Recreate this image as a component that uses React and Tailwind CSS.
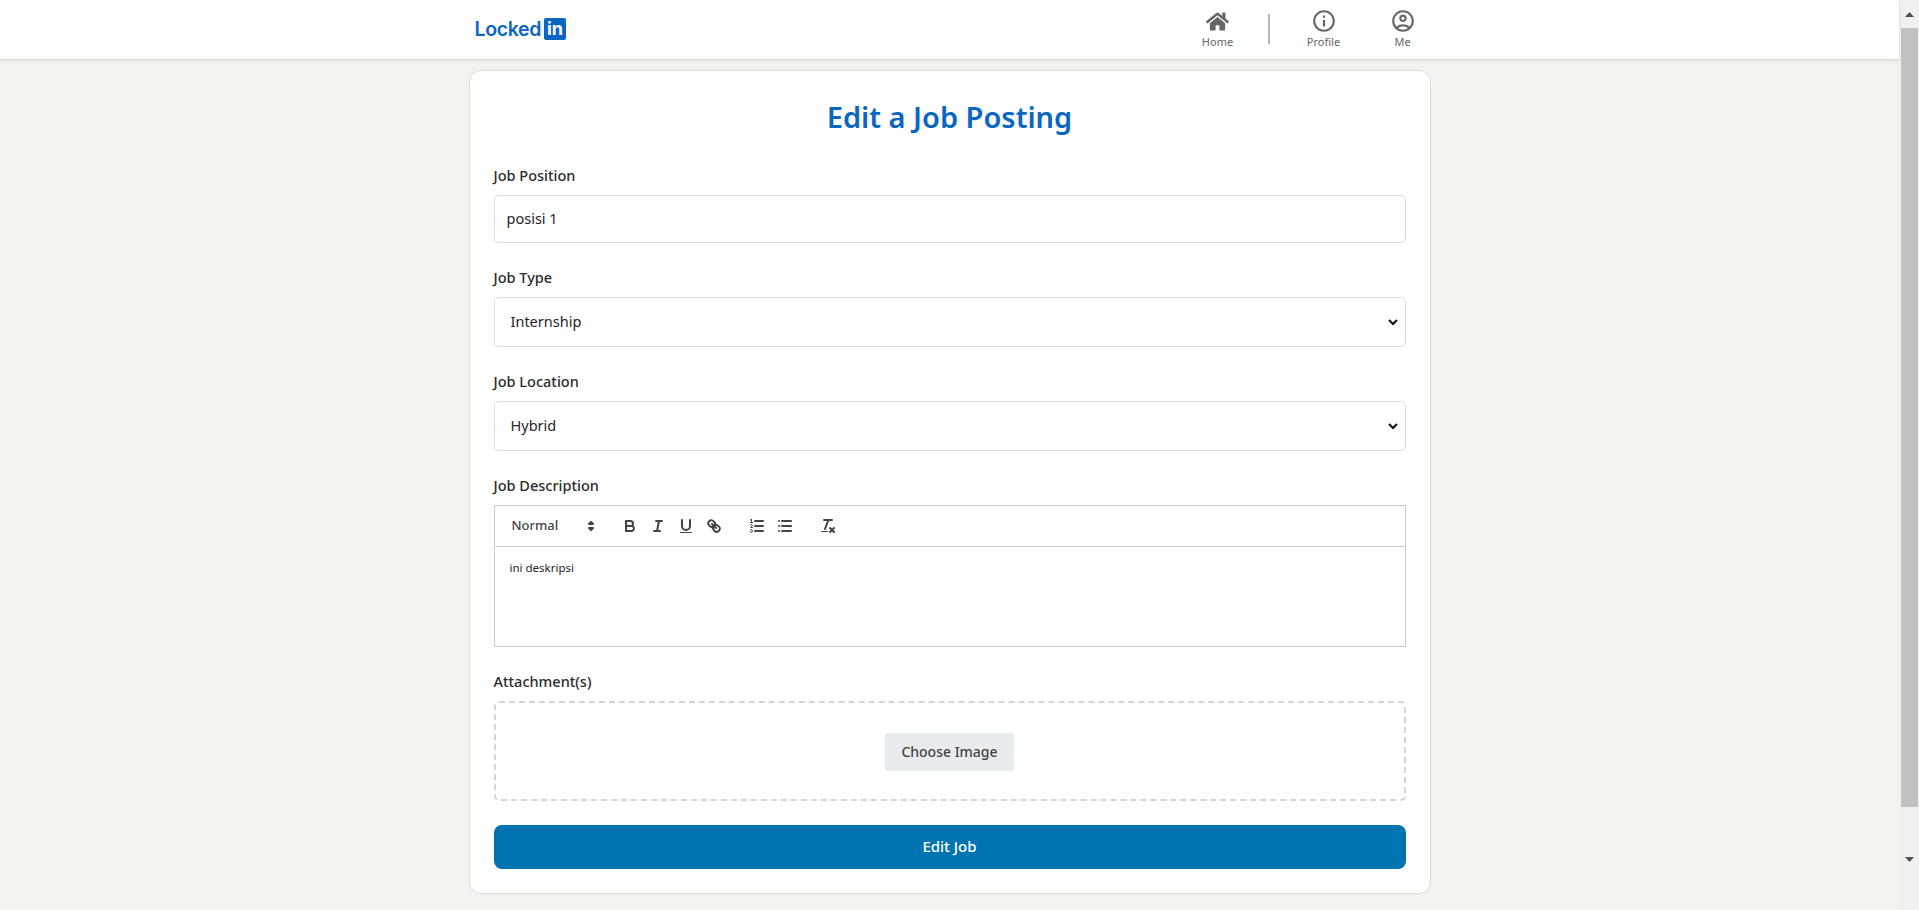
import React from 'react'
import { FaHome } from 'react-icons/fa'
import { MdInfoOutline, MdOutlineAccountCircle } from 'react-icons/md'

const NavItem = ({ icon, label, className }) => (
  <div className={`flex flex-col items-center w-[60px] text-[#666666] ${className}`}>
    <div className="h-[26px] flex items-center justify-center">{icon}</div>
    <span className="text-[11px] leading-[16px]">{label}</span>
  </div>
)

const Navbar = () => (
  <nav className="h-[59px] shrink-0 bg-white shadow-[0_1px_3px_rgba(0,0,0,0.15)] relative">
    <div className="w-[962px] mx-auto h-full flex items-center pl-[6px]">
      <div className="flex items-center gap-[3px] -mt-[1px]">
        <span className="font-['Inter',sans-serif] font-semibold text-[19.5px] leading-[22px] tracking-[-0.35px] text-[#0a66c2]">Locked</span>
        <span className="w-[22px] h-[22px] rounded-[2px] bg-[#0a66c2] flex items-center justify-center font-['Inter',sans-serif] font-bold text-[18px] leading-[22px] text-white">in</span>
      </div>
      <div className="ml-auto flex items-center -mt-[1px]">
        <NavItem icon={<FaHome size={23} />} label="Home" />
        <div className="w-[2px] h-[30px] bg-[#b5b5b5] mx-[20px]" />
        <NavItem icon={<MdInfoOutline size={26} />} label="Profile" className="ml-[4px]" />
        <NavItem icon={<MdOutlineAccountCircle size={26} />} label="Me" className="ml-[19px] -mr-[2px]" />
      </div>
    </div>
  </nav>
)

const Field = ({ label, children }) => (
  <div className="flex flex-col">
    <label className="text-[14.5px] leading-[24px] mb-[8px] font-medium text-[#2b2b2b]">{label}</label>
    {children}
  </div>
)

const boxClass = 'w-full bg-white border border-[#dcdcdc] rounded-[5px] text-[14.5px] text-[#1f2328] outline-none'

const Select = ({ value, options }) => (
  <div className="relative">
    <select defaultValue={value} className={`${boxClass} appearance-none pl-4 pr-8 h-[50px]`}>
      {options.map(o => <option key={o}>{o}</option>)}
    </select>
    <svg viewBox="0 0 10 7" className="w-[10px] h-[7px] absolute right-[8px] top-[22px] fill-none stroke-[#111111] stroke-2">
      <path d="M1 1 L5 5 L9 1" />
    </svg>
  </div>
)

const Icon = ({ children }) => (
  <button type="button" className="w-[28px] h-[24px] px-[5px] py-[3px] flex">
    <svg viewBox="0 0 18 18" className="w-[18px] h-[18px] fill-none stroke-[#444444] stroke-2 [stroke-linecap:round] [stroke-linejoin:round]">
      {children}
    </svg>
  </button>
)

const Toolbar = () => (
  <div className="h-[41px] px-[8px] flex items-center border-b border-[#cccccc]">
    <div className="w-[98px] h-[24px] relative flex items-center pl-[9px] mr-[15px] text-[13px] font-medium text-[#444444]">
      Normal
      <svg viewBox="0 0 18 18" className="w-[18px] h-[18px] absolute right-[1px] top-[3px] fill-[#444444] stroke-[#444444] stroke-2 [stroke-linejoin:round]">
        <polygon points="7 11 9 13 11 11 7 11" />
        <polygon points="7 7 9 5 11 7 7 7" />
      </svg>
    </div>
    <div className="flex mr-[15px]">
      <Icon>
        <path d="M5,4H9.5A2.5,2.5,0,0,1,12,6.5v0A2.5,2.5,0,0,1,9.5,9H5A0,0,0,0,1,5,9V4A0,0,0,0,1,5,4Z" />
        <path d="M5,9h5.5A2.5,2.5,0,0,1,13,11.5v0A2.5,2.5,0,0,1,10.5,14H5a0,0,0,0,1,0,0V9A0,0,0,0,1,5,9Z" />
      </Icon>
      <Icon>
        <line x1="7" x2="13" y1="4" y2="4" />
        <line x1="5" x2="11" y1="14" y2="14" />
        <line x1="8" x2="10" y1="14" y2="4" />
      </Icon>
      <Icon>
        <path d="M5,3V9a4.012,4.012,0,0,0,4,4H9a4.012,4.012,0,0,0,4-4V3" />
        <rect className="fill-[#444444] stroke-0" height="1" rx="0.5" ry="0.5" width="12" x="3" y="15" />
      </Icon>
      <Icon>
        <line x1="7" x2="11" y1="7" y2="11" />
        <path d="M8.9,4.577a3.476,3.476,0,0,1,.36,4.679A3.476,3.476,0,0,1,4.577,8.9C3.185,7.5,2.035,6.4,4.217,4.217S7.5,3.185,8.9,4.577Z" />
        <path d="M13.423,9.1a3.476,3.476,0,0,0-4.679-.36,3.476,3.476,0,0,0,.36,4.679c1.392,1.392,2.5,2.542,4.679.36S14.815,10.5,13.423,9.1Z" />
      </Icon>
    </div>
    <div className="flex mr-[15px]">
      <Icon>
        <line x1="7" x2="15" y1="4" y2="4" />
        <line x1="7" x2="15" y1="9" y2="9" />
        <line x1="7" x2="15" y1="14" y2="14" />
        <g className="stroke-1">
          <line x1="2.5" x2="4.5" y1="5.5" y2="5.5" />
          <path className="fill-[#444444] stroke-0" d="M3.5,6A0.5,0.5,0,0,1,3,5.5V3.085l-0.276.138A0.5,0.5,0,0,1,2.053,3c-0.124-.247-0.023-0.324.224-0.447l1-.5A0.5,0.5,0,0,1,4,2.5v3A0.5,0.5,0,0,1,3.5,6Z" />
          <path d="M4.5,10.5h-2c0-.234,1.85-1.076,1.85-2.234A0.959,0.959,0,0,0,2.5,8.156" />
          <path d="M2.5,14.846a0.959,0.959,0,0,0,1.85-.109A0.7,0.7,0,0,0,3.75,14a0.688,0.688,0,0,0,.6-0.736,0.959,0.959,0,0,0-1.85-.109" />
        </g>
      </Icon>
      <Icon>
        <line x1="6" x2="15" y1="4" y2="4" />
        <line x1="6" x2="15" y1="9" y2="9" />
        <line x1="6" x2="15" y1="14" y2="14" />
        <line x1="3" x2="3" y1="4" y2="4" />
        <line x1="3" x2="3" y1="9" y2="9" />
        <line x1="3" x2="3" y1="14" y2="14" />
      </Icon>
    </div>
    <Icon>
      <line x1="5" x2="13" y1="3" y2="3" />
      <line x1="6" x2="9.35" y1="12" y2="3" />
      <line x1="11" x2="15" y1="11" y2="15" />
      <line x1="15" x2="11" y1="11" y2="15" />
      <rect className="fill-[#444444] stroke-0" height="1" rx="0.5" ry="0.5" width="7" x="2" y="14" />
    </Icon>
  </div>
)

const Scrollbar = () => (
  <div className="w-[20px] shrink-0 bg-[#f1f1f1] flex flex-col items-center">
    <div className="h-[28px] shrink-0 flex items-center justify-center">
      <svg width="9" height="5" viewBox="0 0 9 5" className="fill-[#505050]"><polygon points="4.5,0 9,5 0,5" /></svg>
    </div>
    <div className="h-[779px] w-[17px] ml-[1px] bg-[#c1c1c1]" />
    <div className="flex-1 flex items-center justify-center pt-[1px]">
      <svg width="9" height="5" viewBox="0 0 9 5" className="fill-[#505050]"><polygon points="0,0 9,0 4.5,5" /></svg>
    </div>
  </div>
)

const App = () => {
  return (
    <div className="h-screen flex overflow-hidden bg-[#f3f2ef] font-['Noto_Sans',sans-serif]">
      <div className="flex-1 min-w-0 flex flex-col">
        <Navbar />
        <main className="pt-[11px]">
          <form className="w-[962px] mx-auto bg-white border border-[#dddcd8] rounded-[12px] px-[24px] pt-[24px] pb-[24px] flex flex-col">
            <h1 className="text-[29px] leading-[44px] font-semibold text-[#0a66c2] text-center mb-[24px]">Edit a Job Posting</h1>
            <div className="flex flex-col gap-[22px]">
              <Field label="Job Position">
                <input defaultValue="posisi 1" className={`${boxClass} px-3 pb-[2px] h-[48px]`} />
              </Field>
              <Field label="Job Type">
                <Select value="Internship" options={['Internship', 'Full-time', 'Part-time']} />
              </Field>
              <Field label="Job Location">
                <Select value="Hybrid" options={['Hybrid', 'On-site', 'Remote']} />
              </Field>
              <Field label="Job Description">
                <div className="h-[142px] border border-[#cccccc] flex flex-col">
                  <Toolbar />
                  <div className="flex-1 px-[15px] py-[11px] text-[11.5px] leading-[19px] text-[#1f2328]">ini deskripsi</div>
                </div>
              </Field>
              <Field label="Attachment(s)">
                <div className="h-[100px] border-2 border-dashed border-[#d1d5db] rounded-[5px] flex items-center justify-center">
                  <button type="button" className="w-[129px] h-[38px] mt-[1px] rounded-[3px] bg-[#e9ecef] text-[14px] font-medium text-[#444444]">Choose Image</button>
                </div>
              </Field>
              <button type="button" className="h-[44px] mt-[2px] pb-[2px] rounded-[8px] bg-[#0073b1] text-[15px] font-medium text-white">Edit Job</button>
            </div>
          </form>
        </main>
      </div>
      <Scrollbar />
    </div>
  )
}

export default App
